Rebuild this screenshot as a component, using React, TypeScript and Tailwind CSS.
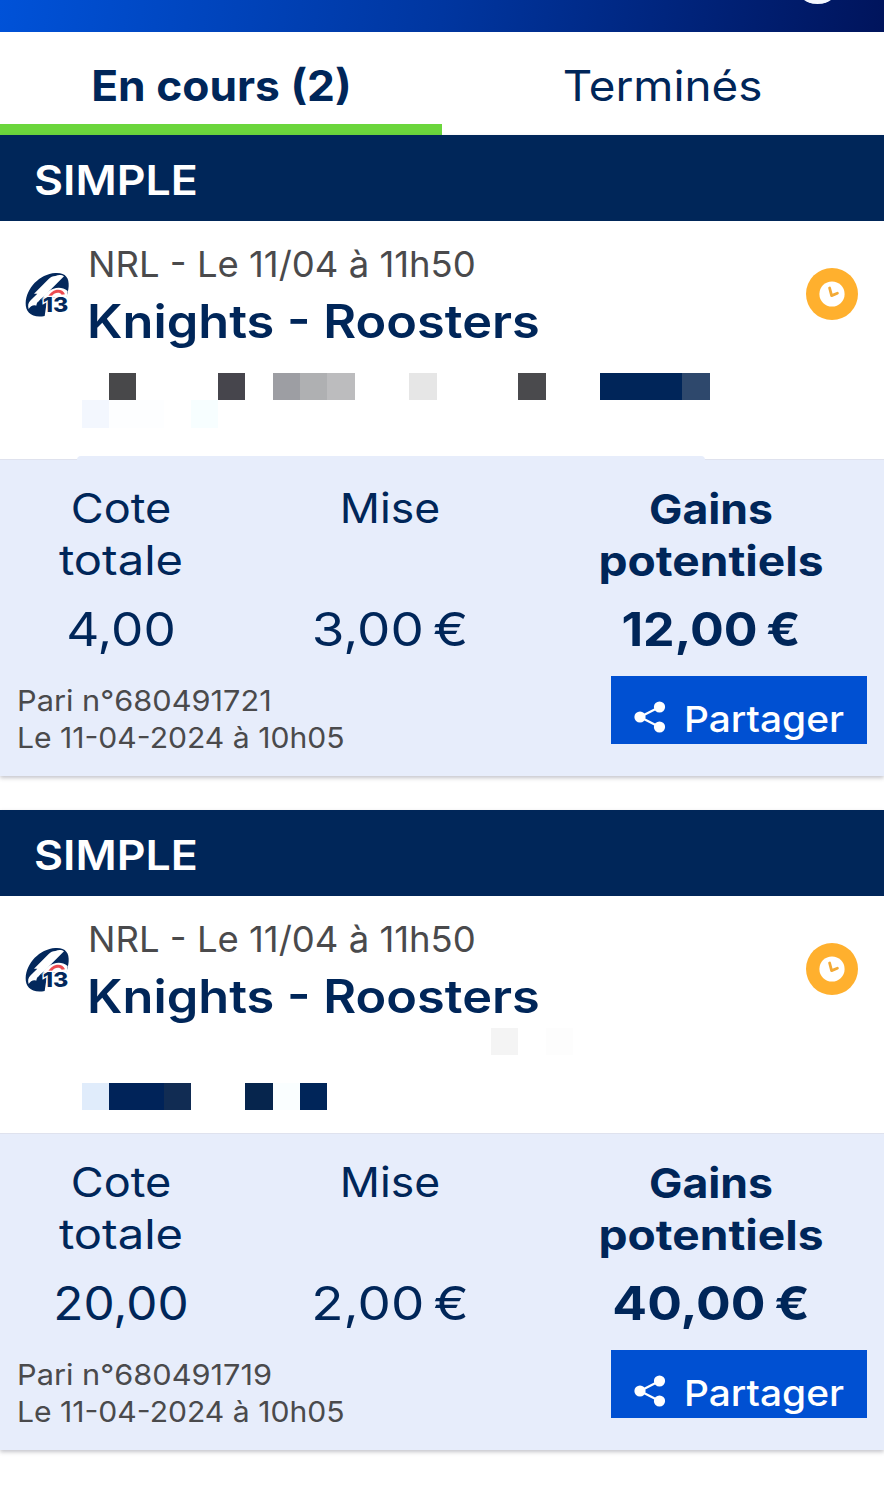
import type { ReactNode } from "react";

type Cell = { at: string; color: string };

type Bet = {
  mosaic: ReactNode;
  odds: ReactNode;
  stake: string;
  gain: ReactNode;
  id: string;
  bodyHeight: string;
  overflow: boolean;
};

function LeagueLogo() {
  return (
    <svg className="mt-[46px] ml-[20px] h-[56px] w-[56px] shrink-0" viewBox="14 4 168 168">
      <path
        d="M88 151C50 158 30 140 31 112C33 68 72 25 120 22C150 20 162 36 160 62C159 76 156 86 153 94L96 98Z"
        fill="#03285c"
      />
      <path
        d="M120 31C130 26 140 27 146 32L90 88C74 102 66 108 66 120C54 116 46 120 40 130C37 120 38 112 46 104L66 84L56 84L100 40C106 34 112 31 120 31Z"
        fill="#fff"
      />
      <path d="M78 104C92 72 130 54 157 76L154 96H80Z" fill="#fff" />
      <path d="M98 94C108 70 140 64 149 86L139 87C132 76 114 82 109 93Z" fill="#ec4b50" />
      <path d="M68 108H84V138H66C61 126 62 114 68 108Z" fill="#03285c" />
      <text
        x="82"
        y="138"
        textLength="77"
        lengthAdjust="spacingAndGlyphs"
        fill="#03285c"
        stroke="#fff"
        strokeWidth="7"
        paintOrder="stroke"
        className="font-['Inter'] text-[62px] font-extrabold"
      >
        13
      </text>
    </svg>
  );
}

function PendingIcon() {
  return (
    <svg className="mt-[47px] mr-[26px] h-[52px] w-[52px] shrink-0" viewBox="0 0 52 52">
      <circle cx="26" cy="26" r="26" fill="#ffb02e" />
      <circle cx="26" cy="26" r="12.6" fill="#fff" />
      <path d="M23.6 20L25.6 27.6L31.4 25.2" fill="none" stroke="#f3aa35" strokeWidth="2.8" strokeLinecap="round" strokeLinejoin="round" />
    </svg>
  );
}

function ShareIcon() {
  return (
    <svg className="-mt-[2px] h-[32px] w-[32px]" viewBox="0 0 32 32">
      <path d="M25.5 6L6 16L25.5 26" fill="none" stroke="#fff" strokeWidth="2.2" />
      <circle cx="6" cy="16" r="5.6" fill="#fff" />
      <circle cx="25.5" cy="6" r="5.6" fill="#fff" />
      <circle cx="25.5" cy="26" r="5.6" fill="#fff" />
    </svg>
  );
}

function Mosaic({ cells, className }: { cells: Cell[]; className: string }) {
  return (
    <div className={`-ml-[7px] grid grid-cols-[repeat(23,27.3px)] grid-rows-[repeat(3,27.3px)] ${className}`}>
      {cells.map((c) => (
        <div key={c.at} className={`${c.at} ${c.color}`} />
      ))}
    </div>
  );
}

function BetCard({ bet }: { bet: Bet }) {
  return (
    <section className="shadow-[0_2px_4px_rgba(60,60,80,0.3)]">
      <h2 className="h-[86px] bg-[#002659] pt-[1px] pl-[34px] text-[41px] leading-[88px] font-semibold text-white">
        <span className="inline-block origin-left scale-x-[1.09]">SIMPLE</span>
      </h2>
      <div className={`flex bg-white ${bet.bodyHeight}`}>
        <LeagueLogo />
        <div className="ml-[12.7px] flex-1 pt-[21px]">
          <p className="-ml-[3px] w-max origin-left scale-x-[1.013] pl-[2px] text-[36px] leading-[44px] whitespace-nowrap text-[#4a4a4c]">
            NRL - Le 11/04 à 11h50
          </p>
          <p className="mt-[7px] -ml-[2px] w-max origin-left scale-x-[1.098] text-[46px] leading-[56px] font-semibold whitespace-nowrap text-[#002659]">
            Knights - Roosters
          </p>
          {bet.mosaic}
        </div>
        <PendingIcon />
      </div>
      <div className="relative h-[317px] border-t border-[#dfe2ee] bg-[#e7edfb] text-[#002659]">
        {bet.overflow && <div className="absolute -top-[4px] left-[77px] h-[4px] w-[628px] rounded-t-sm bg-[#e7edfb]" />}
        <div className="grid grid-cols-[242px_296px_346px] pt-[22px] text-center">
          <div>
            <div className="h-[104px] text-[41px] leading-[52px]">
              <div className="scale-x-[1.1]">Cote</div>
              <div className="scale-x-[1.149]">totale</div>
            </div>
            <div className="mt-[13px] text-[46px] leading-[60px]">{bet.odds}</div>
          </div>
          <div>
            <div className="h-[104px] scale-x-[1.085] text-[41px] leading-[52px]">Mise</div>
            <div className="mt-[13px] scale-x-[1.15] text-[46px] leading-[60px] [word-spacing:-5px]">{bet.stake}</div>
          </div>
          <div className="font-bold">
            <div className="h-[104px] pt-[1px] text-[41px] leading-[52px]">
              <div className="scale-x-[1.087]">Gains</div>
              <div className="scale-x-[1.125]">potentiels</div>
            </div>
            <div className="mt-[13px] text-[46px] leading-[60px] [word-spacing:-3px]">{bet.gain}</div>
          </div>
        </div>
        <div className="mt-[17px] flex justify-between pr-[17px] pl-[17px]">
          <div className="pt-[7px] text-[29px] leading-[36.5px] text-[#4a4a4c]">
            <div className="w-max origin-left scale-x-[1.06]">{bet.id}</div>
            <div className="w-max origin-left scale-x-[1.038]">Le 11-04-2024 à 10h05</div>
          </div>
          <button className="flex h-[68px] w-[256px] items-center bg-[#0050d2] pt-[16px] pl-[23px] text-[36px] leading-[44px] font-medium text-white">
            <ShareIcon />
            <span className="ml-[17.5px] origin-left scale-x-[1.08] pt-[1px]">Partager</span>
          </button>
        </div>
      </div>
    </section>
  );
}

const bets: Bet[] = [
  {
    mosaic: (
      <Mosaic
        className="mt-[24px]"
        cells={[
          { at: "col-start-2 row-start-1", color: "bg-[#48484a]" },
          { at: "col-start-6 row-start-1", color: "bg-[#46454c]" },
          { at: "col-start-8 row-start-1", color: "bg-[#9d9ea3]" },
          { at: "col-start-9 row-start-1", color: "bg-[#afb0b2]" },
          { at: "col-start-10 row-start-1", color: "bg-[#bcbcbe]" },
          { at: "col-start-13 row-start-1", color: "bg-[#e6e6e6]" },
          { at: "col-start-17 row-start-1", color: "bg-[#4a4a4d]" },
          { at: "col-start-20 col-span-3 row-start-1", color: "bg-[#002559]" },
          { at: "col-start-23 row-start-1", color: "bg-[#2e486c]" },
          { at: "col-start-1 row-start-2", color: "bg-[#f3f7fe]" },
          { at: "col-start-2 col-span-2 row-start-2", color: "bg-[#fdfeff]" },
          { at: "col-start-5 row-start-2", color: "bg-[#f7feff]" },
        ]}
      />
    ),
    odds: <div className="scale-x-[1.115]">4,00</div>,
    stake: "3,00 €",
    gain: <div className="scale-x-[1.09]">12,00 €</div>,
    id: "Pari n°680491721",
    bodyHeight: "h-[238px]",
    overflow: true,
  },
  {
    mosaic: (
      <Mosaic
        className="mt-[4px]"
        cells={[
          { at: "col-start-16 row-start-1", color: "bg-[#f4f4f4]" },
          { at: "col-start-18 row-start-1", color: "bg-[#fdfdfd]" },
          { at: "col-start-1 row-start-3", color: "bg-[#e0ecfb]" },
          { at: "col-start-2 col-span-2 row-start-3", color: "bg-[#002359]" },
          { at: "col-start-4 row-start-3", color: "bg-[#112c53]" },
          { at: "col-start-7 row-start-3", color: "bg-[#06254d]" },
          { at: "col-start-8 row-start-3", color: "bg-[#fafeff]" },
          { at: "col-start-9 row-start-3", color: "bg-[#002559]" },
        ]}
      />
    ),
    odds: <div className="scale-x-[1.075]">20,00</div>,
    stake: "2,00 €",
    gain: <div className="scale-x-[1.12]">40,00 €</div>,
    id: "Pari n°680491719",
    bodyHeight: "h-[237px]",
    overflow: false,
  },
];

export default function App() {
  return (
    <main className="h-[1500px] w-[884px] overflow-hidden bg-white font-['Inter',sans-serif]">
      <header className="flex h-[32px] justify-end overflow-hidden bg-linear-[100deg] from-[#0052d8] via-[#0036a0] via-50% to-[#00145c] pr-[42px]">
        <div className="-mt-[45px] h-[49px] w-[49px] rounded-full bg-[#f4f8ff]" />
      </header>
      <nav className="grid h-[103px] grid-cols-2 text-center text-[42px] leading-[107px] text-[#002659]">
        <div className="h-[103px] border-b-[11px] border-[#6bd63c] font-bold">
          <span className="inline-block scale-x-[1.055]">En cours (2)</span>
        </div>
        <div>
          <span className="inline-block scale-x-[1.09]">Terminés</span>
        </div>
      </nav>
      <div className="flex flex-col gap-[34px]">
        {bets.map((bet) => (
          <BetCard key={bet.id} bet={bet} />
        ))}
      </div>
    </main>
  );
}
